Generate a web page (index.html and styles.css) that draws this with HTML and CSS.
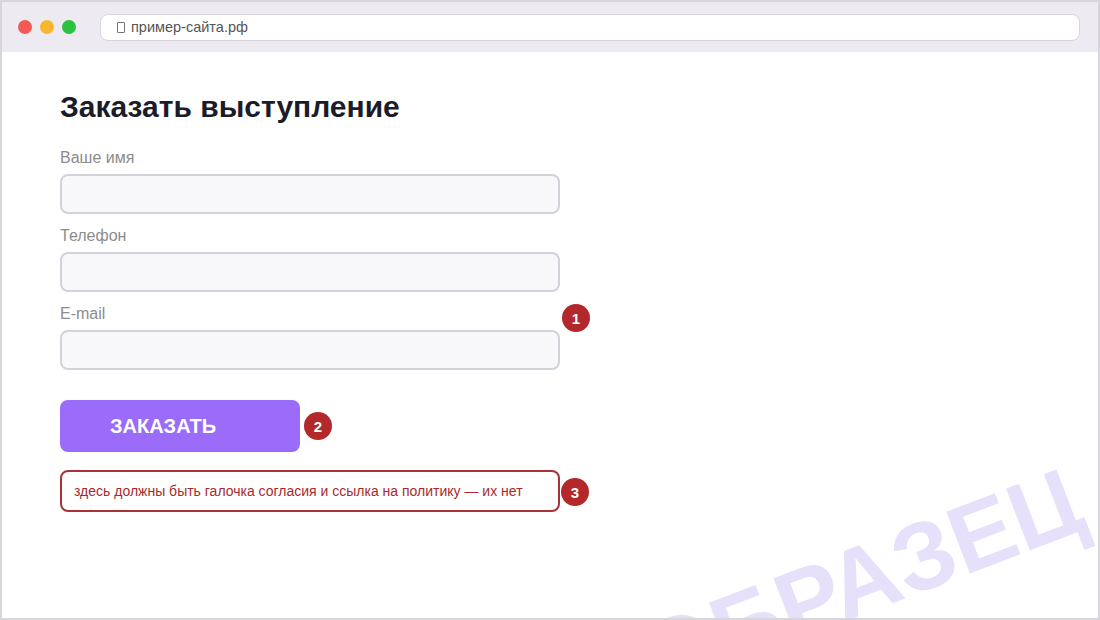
FILE: index.html
```html
<!DOCTYPE html>
<html lang="ru">
<head>
<meta charset="utf-8">
<title>Заказать выступление</title>
<link rel="stylesheet" href="styles.css">
</head>
<body>
<div class="frame">
  <div class="topbar">
    <div class="lights">
      <span class="light red"></span>
      <span class="light yellow"></span>
      <span class="light green"></span>
    </div>
    <div class="url"><span class="tofu"></span><span class="url-text">пример-сайта.рф</span></div>
  </div>
  <div class="page">
    <div class="form">
      <h1 class="title">Заказать выступление</h1>
      <div class="field">
        <label class="label">Ваше имя</label>
        <div class="input"></div>
      </div>
      <div class="field">
        <label class="label">Телефон</label>
        <div class="input"></div>
      </div>
      <div class="field">
        <label class="label">E-mail</label>
        <div class="input"></div>
        <span class="badge badge-email">1</span>
      </div>
      <div class="button-row">
        <div class="button">ЗАКАЗАТЬ</div>
        <span class="badge">2</span>
      </div>
      <div class="notice-row">
        <div class="notice">здесь должны быть галочка согласия и ссылка на политику — их нет</div>
        <span class="badge badge-notice">3</span>
      </div>
    </div>
    <div class="watermark">ОБРАЗЕЦ</div>
  </div>
</div>
</body>
</html>
```

FILE: styles.css
```css
* { box-sizing: border-box; }
html, body { margin: 0; padding: 0; }
body {
  width: 1100px;
  height: 620px;
  overflow: hidden;
  font-family: "Liberation Sans", Arial, sans-serif;
  background: #ffffff;
}
.frame {
  width: 1100px;
  height: 620px;
  border: 2px solid #d6d6dc;
  display: flex;
  flex-direction: column;
  overflow: hidden;
}
.topbar {
  height: 50px;
  flex: none;
  background: #edeaf2;
  display: flex;
  align-items: center;
  padding-left: 16px;
  padding-right: 18px;
}
.lights {
  display: flex;
  gap: 8px;
}
.light {
  width: 14px;
  height: 14px;
  border-radius: 50%;
  display: block;
}
.red { background: #f05a57; }
.yellow { background: #f8b72e; }
.green { background: #2ac23f; }
.url {
  margin-left: 24px;
  flex: 1;
  height: 27px;
  background: #ffffff;
  border: 1px solid #d9d5e0;
  border-radius: 8px;
  display: flex;
  align-items: center;
  padding-left: 16px;
  color: #555555;
  font-size: 14.5px;
}
.tofu {
  width: 8px;
  height: 11px;
  border: 1px solid #777777;
  border-radius: 1px;
  margin-right: 6px;
}
.page {
  position: relative;
  flex: 1;
  overflow: hidden;
}
.form {
  width: 530px;
  padding-left: 58px;
  padding-top: 37px;
}
.title {
  margin: 0 0 24px 0;
  font-size: 30px;
  line-height: 36px;
  font-weight: 700;
  color: #1b1b2a;
}
.field {
  position: relative;
  width: 500px;
  margin-bottom: 13px;
}
.label {
  display: block;
  font-size: 16px;
  line-height: 18px;
  color: #8c8c8c;
  margin-bottom: 7px;
}
.input {
  width: 500px;
  height: 40px;
  border: 2px solid #d3d2da;
  border-radius: 8px;
  background: #f8f8fb;
}
.badge {
  width: 28px;
  height: 28px;
  border-radius: 50%;
  background: #b2282b;
  color: #ffffff;
  font-weight: 700;
  font-size: 15px;
  display: flex;
  align-items: center;
  justify-content: center;
}
.badge-email {
  position: absolute;
  left: 502px;
  top: -1px;
}
.button-row {
  display: flex;
  align-items: center;
  gap: 4px;
  margin-top: 30px;
}
.button {
  width: 240px;
  height: 52px;
  background: #9b6bfa;
  border-radius: 8px;
  color: #ffffff;
  font-weight: 700;
  font-size: 20px;
  display: flex;
  align-items: center;
  padding-left: 50px;
}
.notice-row {
  position: relative;
  margin-top: 18px;
  width: 500px;
}
.notice {
  width: 500px;
  height: 42px;
  border: 2px solid #a93236;
  border-radius: 8px;
  background: #ffffff;
  color: #a8292d;
  font-size: 14px;
  display: flex;
  align-items: center;
  padding-left: 12px;
}
.badge-notice {
  position: absolute;
  left: 501px;
  top: 8px;
}
.watermark {
  position: absolute;
  left: 626px;
  top: 566px;
  font-size: 96px;
  font-weight: 700;
  color: #e6e0fb;
  transform: rotate(-21deg);
  transform-origin: left top;
  white-space: nowrap;
  pointer-events: none;
  line-height: 1;
}
```
